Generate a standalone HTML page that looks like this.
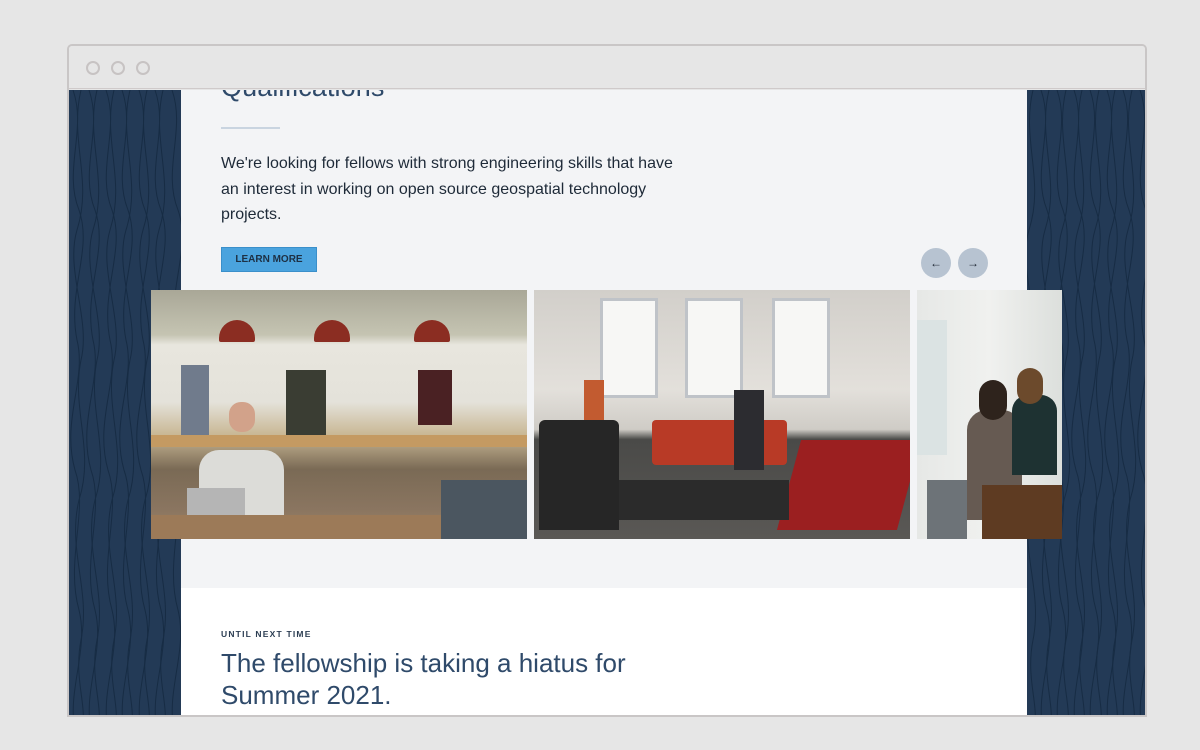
<!DOCTYPE html>
<html><head><meta charset="utf-8">
<style>
*{margin:0;padding:0;box-sizing:border-box}
html,body{width:1200px;height:750px;overflow:hidden;background:#e6e6e6;font-family:"Liberation Sans",sans-serif}
.frame{position:absolute;left:67px;top:44px;width:1080px;height:673px;border:2px solid #c9c6c6;border-radius:5px 5px 0 0;background:#e6e6e6;overflow:hidden}
.bar{position:absolute;left:0;top:0;width:100%;height:43px;border-bottom:1px solid #cfcaca;background:#e6e6e6}
.dot{position:absolute;top:15px;width:14px;height:14px;border:2px solid #c7c3c3;border-radius:50%}
.view{position:absolute;left:0;top:44px;width:1076px;height:625px;background:#233a56;overflow:hidden}
.topo{position:absolute;top:0;height:625px}
.panel{position:absolute;left:112px;top:0;width:846px;height:498px;background:#f3f4f6}
.white{position:absolute;left:112px;top:498px;width:846px;height:130px;background:#fff}
h1{position:absolute;left:152px;top:-18px;font-weight:normal;font-size:27px;color:#2f4a6a;letter-spacing:.1px}
.rule{position:absolute;left:152px;top:37px;width:59px;height:2px;background:#c9d4e0}
p.t{position:absolute;left:152px;top:61px;width:462px;font-size:16px;line-height:25.5px;color:#1e2a38}
.btn{position:absolute;left:152px;top:157px;width:96px;height:25px;background:#4aa3de;border:1px solid #3a8fca;color:#1d3044;font-size:10px;font-weight:bold;text-align:center;line-height:23px}
.arr{position:absolute;top:158px;width:30px;height:30px;border-radius:50%;background:#b7c3d1;color:#1b2430;font-size:12px;text-align:center;line-height:30px;font-weight:bold}
.ph{position:absolute;top:200px;height:249px;overflow:hidden}
.k{position:absolute}
.ey{position:absolute;left:152px;top:539px;font-size:8.5px;font-weight:bold;letter-spacing:1.2px;color:#2b3d52}
h2{position:absolute;left:152px;top:557px;font-weight:normal;font-size:26px;line-height:32px;color:#2f4a6a}
</style></head><body>
<div class="frame">
<div class="bar"><div class="dot" style="left:17px"></div><div class="dot" style="left:42px"></div><div class="dot" style="left:67px"></div></div>
<div class="view">
<svg width="0" height="0" style="position:absolute"><defs>
<path id="w" d="M0 0 C14 40 -10 80 6 120 C20 160 -6 200 4 250 C14 290 -12 330 2 380 C16 420 -8 470 6 520 C16 560 -6 600 2 640" fill="none" stroke="#172c44" stroke-width="1"/>
<path id="v" d="M0 0 C-12 50 12 90 -4 140 C-16 180 10 230 0 270 C-10 320 14 360 -2 410 C-14 460 10 500 0 550 C-8 590 8 620 0 640" fill="none" stroke="#172c44" stroke-width="1"/>
</defs></svg>
<svg class="topo" style="left:0" width="112" height="625">
<use href="#w" x="4"/><use href="#v" x="12"/><use href="#w" x="20"/><use href="#v" x="28"/><use href="#w" x="37"/><use href="#v" x="45"/><use href="#w" x="53"/><use href="#v" x="61"/><use href="#w" x="70"/><use href="#v" x="78"/><use href="#w" x="86"/><use href="#v" x="94"/><use href="#w" x="103"/>
</svg>
<svg class="topo" style="left:958px" width="118" height="625">
<use href="#v" x="6"/><use href="#w" x="14"/><use href="#v" x="22"/><use href="#w" x="30"/><use href="#v" x="39"/><use href="#w" x="47"/><use href="#v" x="55"/><use href="#w" x="63"/><use href="#v" x="72"/><use href="#w" x="80"/><use href="#v" x="88"/><use href="#w" x="96"/><use href="#v" x="105"/><use href="#w" x="113"/>
</svg>
<div class="panel"></div>
<div class="white"></div>
<h1>Qualifications</h1>
<div class="rule"></div>
<p class="t">We're looking for fellows with strong engineering skills that have an interest in working on open source geospatial technology projects.</p>
<div class="btn">LEARN MORE</div>
<div class="arr" style="left:852px">&#8592;</div>
<div class="arr" style="left:889px">&#8594;</div>

<div class="ph" style="left:82px;width:376px;background:linear-gradient(#a9a797 0,#c5c4b2 18%,#e8e6de 22%,#e4e2da 45%,#c9b895 58%,#7a6a55 72%,#8a7560 88%,#a08466 100%)">
<div class="k" style="left:0;top:145px;width:376px;height:12px;background:#c49a62"></div>
<div class="k" style="left:68px;top:30px;width:36px;height:22px;background:#8b2d22;border-radius:18px 18px 2px 2px"></div>
<div class="k" style="left:163px;top:30px;width:36px;height:22px;background:#8b2d22;border-radius:18px 18px 2px 2px"></div>
<div class="k" style="left:263px;top:30px;width:36px;height:22px;background:#8b2d22;border-radius:18px 18px 2px 2px"></div>
<div class="k" style="left:48px;top:160px;width:85px;height:75px;background:#dcdcd8;border-radius:20px 20px 0 0"></div>
<div class="k" style="left:78px;top:112px;width:26px;height:30px;background:#d2a28a;border-radius:12px"></div>
<div class="k" style="left:36px;top:198px;width:58px;height:35px;background:#b5b5b5"></div>
<div class="k" style="left:135px;top:80px;width:40px;height:65px;background:#3a3d33"></div>
<div class="k" style="left:267px;top:80px;width:34px;height:55px;background:#4a2123"></div>
<div class="k" style="left:30px;top:75px;width:28px;height:70px;background:#707b8c"></div>
<div class="k" style="left:290px;top:190px;width:86px;height:60px;background:#4b5660"></div>
<div class="k" style="left:0;top:225px;width:290px;height:24px;background:#9c7a58"></div>
</div>

<div class="ph" style="left:465px;width:376px;background:linear-gradient(#d2cfca 0,#e3e0db 40%,#cfccc6 56%,#4a4a48 60%,#5a5855 100%)">
<div class="k" style="left:66px;top:8px;width:58px;height:100px;background:#f7f7f5;border:3px solid #bfc3c8"></div>
<div class="k" style="left:151px;top:8px;width:58px;height:100px;background:#f7f7f5;border:3px solid #bfc3c8"></div>
<div class="k" style="left:238px;top:8px;width:58px;height:100px;background:#f7f7f5;border:3px solid #bfc3c8"></div>
<div class="k" style="left:118px;top:130px;width:135px;height:45px;background:#b83a26;border-radius:4px"></div>
<div class="k" style="left:5px;top:130px;width:80px;height:110px;background:#262626;border-radius:6px 6px 0 0"></div>
<div class="k" style="left:255px;top:150px;width:120px;height:90px;background:#9b1f20;transform:skewX(-15deg)"></div>
<div class="k" style="left:85px;top:190px;width:170px;height:40px;background:#2b2b2b"></div>
<div class="k" style="left:200px;top:100px;width:30px;height:80px;background:#2c2c30"></div>
<div class="k" style="left:50px;top:90px;width:20px;height:40px;background:#c25b30"></div>
</div>

<div class="ph" style="left:848px;width:145px;background:linear-gradient(90deg,#e6e8e6 0,#f0f1ef 50%,#dcdfdc 100%)">
<div class="k" style="left:0;top:30px;width:30px;height:135px;background:#dbe3e3"></div>
<div class="k" style="left:50px;top:120px;width:55px;height:110px;background:#665a52;border-radius:20px 20px 0 0"></div>
<div class="k" style="left:62px;top:90px;width:28px;height:40px;background:#2e231c;border-radius:14px"></div>
<div class="k" style="left:95px;top:105px;width:45px;height:80px;background:#1e3232;border-radius:16px 16px 0 0"></div>
<div class="k" style="left:100px;top:78px;width:26px;height:36px;background:#6c4a2c;border-radius:13px"></div>
<div class="k" style="left:10px;top:190px;width:40px;height:59px;background:#6d7378"></div>
<div class="k" style="left:65px;top:195px;width:80px;height:54px;background:#5e3b22"></div>
</div>

<div class="ey">UNTIL NEXT TIME</div>
<h2>The fellowship is taking a hiatus for<br>Summer 2021.</h2>
</div>
</div>
</body></html>
